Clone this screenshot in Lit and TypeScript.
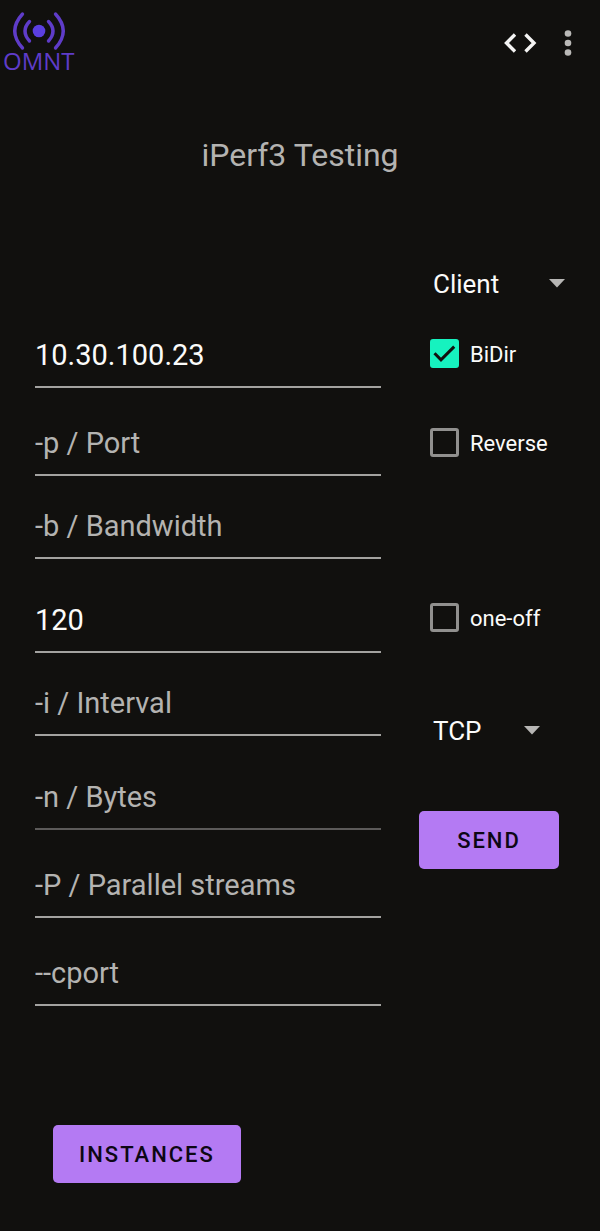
import { LitElement, html, svg, css } from "lit";
import { customElement, property } from "lit/decorators.js";

interface Field {
  name: string;
  label: string;
  value?: string;
  gap?: "small" | "medium" | "large";
  dim?: boolean;
}

const FIELDS: Field[] = [
  { name: "host", label: "-c / Host", value: "10.30.100.23" },
  { name: "port", label: "-p / Port", gap: "medium" },
  { name: "bandwidth", label: "-b / Bandwidth", gap: "small" },
  { name: "time", label: "-t / Time", value: "120", gap: "large" },
  { name: "interval", label: "-i / Interval", gap: "small" },
  { name: "bytes", label: "-n / Bytes", gap: "large", dim: true },
  { name: "streams", label: "-P / Parallel streams", gap: "medium" },
  { name: "cport", label: "--cport", gap: "medium" },
];

@customElement("spinner-select")
export class SpinnerSelect extends LitElement {
  @property() label = "";
  @property({ attribute: false }) options: string[] = [];

  static styles = css`
    :host {
      display: grid;
      align-items: center;
    }
    .control,
    .arrow {
      grid-area: 1 / 1;
    }
    .control {
      appearance: none;
      width: 100%;
      height: 40px;
      margin: 0;
      padding: 0 24px 0 14px;
      border: 0;
      background: transparent;
      color: #fbfbfa;
      font: 400 26px/40px Roboto, sans-serif;
    }
    .control option {
      background: #2a2928;
    }
    .arrow {
      justify-self: end;
      pointer-events: none;
    }
  `;

  render() {
    return html`
      <select class="control" aria-label=${this.label}>
        ${this.options.map((o) => html`<option>${o}</option>`)}
      </select>
      <svg class="arrow" width="17" height="10" viewBox="0 0 17 10" aria-hidden="true">
        <path d="M0 0h16l-8 8.5z" fill="#b7b6b4" />
      </svg>
    `;
  }
}

@customElement("check-option")
export class CheckOption extends LitElement {
  @property() label = "";
  @property({ type: Boolean }) checked = false;

  static styles = css`
    :host {
      display: block;
    }
    .row {
      display: flex;
      align-items: center;
      gap: 11px;
      height: 32px;
      padding-left: 11px;
      color: #fbfbfa;
      font: 400 22px/28px Roboto, sans-serif;
      white-space: nowrap;
    }
    .text {
      padding-top: 4px;
    }
    .stack {
      display: grid;
    }
    .box,
    .tick {
      grid-area: 1 / 1;
      width: 29px;
      height: 29px;
    }
    .box {
      appearance: none;
      box-sizing: border-box;
      margin: 0;
      border: 3px solid #91908e;
      border-radius: 3px;
    }
    .box:checked {
      border-color: #16f2bf;
      background: #16f2bf;
    }
    .tick {
      visibility: hidden;
      pointer-events: none;
    }
    .box:checked + .tick {
      visibility: visible;
    }
  `;

  render() {
    return html`
      <label class="row">
        <span class="stack">
          <input class="box" type="checkbox" .checked=${this.checked} />
          <svg class="tick" viewBox="0 0 29 29" aria-hidden="true">
            <path d="M4.5 14.2l6.5 6.6L24.2 7.6" fill="none" stroke="#11100e" stroke-width="3" />
          </svg>
        </span>
        <span class="text">${this.label}</span>
      </label>
    `;
  }
}

@customElement("app-root")
export class AppRoot extends LitElement {
  static styles = css`
    :host {
      display: block;
      box-sizing: border-box;
      min-height: 100vh;
      padding-bottom: 47px;
      background: #11100e;
      color: #b4b3b1;
      font-family: Roboto, sans-serif;
    }
    .bar {
      display: flex;
      justify-content: space-between;
      align-items: center;
      height: 85px;
      padding: 0 20px 0 3px;
    }
    .brand {
      display: flex;
      flex-direction: column;
      align-items: center;
      color: #5f3cc9;
      font: 400 24px/24px "Open Sans", sans-serif;
    }
    .waves {
      overflow: visible;
    }
    .actions {
      display: flex;
      gap: 16px;
    }
    .action {
      display: grid;
      place-items: center;
      width: 40px;
      height: 40px;
      padding: 0;
      border: 0;
      background: transparent;
    }
    .action.more {
      width: 24px;
    }
    .title {
      margin: 50px 0 89px;
      text-align: center;
      font-size: 32px;
      line-height: 40px;
      font-weight: 400;
    }
    .form {
      display: grid;
      grid-template-columns: minmax(0, 1fr) 162px;
      column-gap: 38px;
      padding: 0 19px 0 35px;
    }
    .fields {
      display: flex;
      flex-direction: column;
      padding-top: 68px;
    }
    .field {
      box-sizing: border-box;
      width: 100%;
      height: 56px;
      padding: 0 0 8px;
      border: 0;
      border-bottom: 2px solid #a3a2a0;
      border-radius: 0;
      outline: 0;
      background: transparent;
      color: #fbfbfa;
      font: 400 29px/40px Roboto, sans-serif;
    }
    .field::placeholder {
      color: #b4b3b1;
      opacity: 1;
    }
    .field.dim {
      border-bottom-color: #5c5a59;
    }
    .small {
      margin-top: 27px;
    }
    .medium {
      margin-top: 32px;
    }
    .large {
      margin-top: 38px;
    }
    .options {
      display: flex;
      flex-direction: column;
      align-items: flex-start;
    }
    .mode {
      width: 147px;
      margin-bottom: 33px;
    }
    .bidir {
      margin-bottom: 57px;
    }
    .reverse {
      margin-bottom: 143px;
    }
    .one-off {
      margin-bottom: 78px;
    }
    .protocol {
      width: 122px;
      margin-bottom: 60px;
    }
    .button {
      height: 58px;
      padding: 2px 26px 0;
      border: 0;
      border-radius: 5px;
      background: #b47af3;
      color: #0d0714;
      font: 500 22px/56px Roboto, sans-serif;
      letter-spacing: 2px;
    }
    .send {
      min-width: 140px;
    }
    .footer {
      padding: 119px 53px 0;
    }
  `;

  private logo() {
    return html`
      <svg class="waves" width="54" height="37" viewBox="0 1 54 37" aria-hidden="true">
        <g fill="none" stroke="#5f3cc9" stroke-width="3.4" stroke-linecap="round">
          <path d="M10.5 3Q-5 20 10.5 37" />
          <path d="M17.5 10.5Q8.500 20 17.500 30" />
          <path d="M36.500 10.500Q45.500 20 36.500 30" />
          <path d="M43.500 3Q59 20 43.500 37" />
        </g>
        <circle cx="27" cy="20" r="6.300" fill="#5b3fe0" />
      </svg>`;
  }

  render() {
    return html`
      <header class="bar">
        <div class="brand">${this.logo()}<span>OMNT</span></div>
        <div class="actions">
          <button class="action" aria-label="Code">
            <svg width="34" height="22" viewBox="0 0 34 22" aria-hidden="true">
              <path
                d="M12 2.500L3.500 11l8.500 8.500M22.500 2.500L31 11l-8.500 8.500"
                fill="none"
                stroke="#f4f4f3"
                stroke-width="3.400"
              />
            </svg>
          </button>
          <button class="action more" aria-label="More options">
            <svg width="8" height="28" viewBox="0 0 8 28" aria-hidden="true">
              <g fill="#bab9b7">
                <circle cx="4" cy="4.500" r="3.300" />
                <circle cx="4" cy="14" r="3.300" />
                <circle cx="4" cy="23.500" r="3.300" />
              </g>
            </svg>
          </button>
        </div>
      </header>
      <main>
        <h1 class="title">iPerf3 Testing</h1>
        <form class="form" @submit=${(e: Event) => e.preventDefault()}>
          <div class="fields">
            ${FIELDS.map(
              (f) => html`<input
                class="field ${f.gap ?? ""} ${f.dim ? "dim" : ""}"
                type="text"
                name=${f.name}
                aria-label=${f.label}
                placeholder=${f.label}
                .value=${f.value ?? ""}
              />`
            )}
          </div>
          <div class="options">
            <spinner-select class="mode" label="Mode" .options=${["Client", "Server"]}></spinner-select>
            <check-option class="bidir" label="BiDir" checked></check-option>
            <check-option class="reverse" label="Reverse"></check-option>
            <check-option class="one-off" label="one-off"></check-option>
            <spinner-select class="protocol" label="Protocol" .options=${["TCP", "UDP"]}></spinner-select>
            <button class="button send" type="submit">SEND</button>
          </div>
        </form>
        <div class="footer">
          <button class="button" type="button">INSTANCES</button>
        </div>
      </main>
    `;
  }
}
